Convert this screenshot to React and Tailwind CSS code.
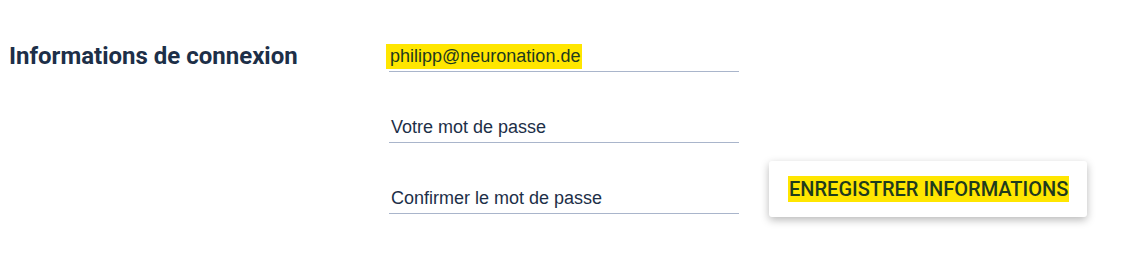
export default function App() {
  return (
    <div className="w-[1122px] h-[261px] bg-white flex items-start pl-[9px] pt-[40px]">
      {/* TITLE */}
      <h2 className="w-[380px] mt-[1px] text-[24px] leading-[30px] font-bold text-[#1d2f48] [font-family:Roboto,sans-serif]">
        Informations de connexion
      </h2>

      {/* FIELDS */}
      <div className="w-[350px] mt-[4px] flex flex-col gap-[43px] [font-family:'Liberation_Sans',Arial,sans-serif]">
        <div className="border-b border-[#a9b5cb] h-[28px]">
          <span className="inline-block align-top -ml-[3px] pl-[4px] pr-[2px] bg-[#ffe600] text-[#1f3b1e] text-[18px] leading-[25px]">
            philipp@neuronation.de
          </span>
        </div>
        <div className="border-b border-[#a9b5cb] h-[28px]">
          <span className="inline-block align-top pl-[2px] text-[#1d2f48] text-[18px] leading-[25px]">
            Votre mot de passe
          </span>
        </div>
        <div className="border-b border-[#a9b5cb] h-[28px]">
          <span className="inline-block align-top pl-[2px] text-[#1d2f48] text-[18px] leading-[25px]">
            Confirmer le mot de passe
          </span>
        </div>
      </div>

      {/* SAVE BUTTON */}
      <button className="ml-[30px] mt-[121px] w-[318px] h-[56px] rounded-[3px] bg-white shadow-[0_3px_8px_rgba(0,0,0,0.28)] flex items-center pl-[19px]">
        <span className="inline-block bg-[#ffe600] px-[1px] text-[20px] leading-[26px] font-medium uppercase text-[#1f3b1e] [font-family:Roboto,sans-serif]">
          Enregistrer informations
        </span>
      </button>
    </div>
  );
}
